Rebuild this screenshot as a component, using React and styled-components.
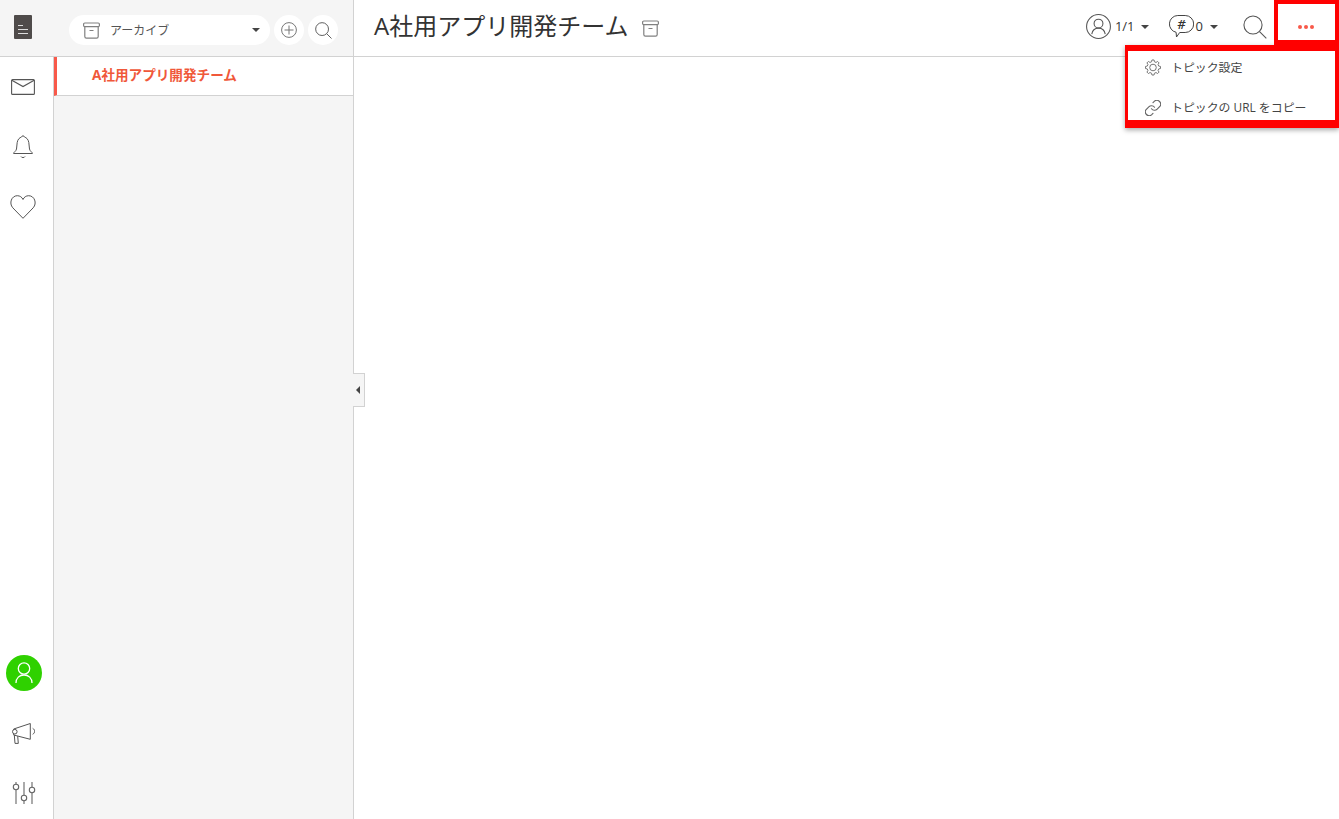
import React from 'react'
import styled, { createGlobalStyle } from 'styled-components'

const Global = createGlobalStyle`
  html, body { margin: 0; padding: 0; height: 100%; background: #fff; overflow: hidden; }
  body { font-family: "Open Sans", "Noto Sans CJK JP", sans-serif; color: #333; }
`
const Root = styled.div`
  position: relative;
  width: 1339px;
  height: 819px;
  overflow: hidden;
  display: grid;
  grid-template-columns: 53px 301px 1fr;
  grid-template-rows: 57px 762px;
`
const TopLeft = styled.div`
  grid-column: 1 / 3;
  background: #f5f5f5;
  border-right: 1px solid #d2d2d2;
  border-bottom: 1px solid #d2d2d2;
  box-sizing: border-box;
  display: flex;
  align-items: center;
  padding-left: 14px;
`
const Logo = styled.div`
  width: 18px;
  height: 24px;
  margin: 0 37px 2px 0;
  padding-bottom: 5px;
  box-sizing: border-box;
  border-radius: 1px;
  background: #4f4b4a;
  display: flex;
  flex-direction: column;
  align-items: center;
  justify-content: flex-end;
  gap: 3px;
`
const LogoLine = styled.span`
  display: block;
  height: 1px;
  width: 10px;
  background: #ddd;
`
const LogoShortLine = styled(LogoLine)`
  width: 5px;
  margin-right: 5px;
`
const Filter = styled.div`
  width: 201px;
  height: 30px;
  margin-top: 4px;
  border-radius: 15px;
  background: #fff;
  display: flex;
  align-items: center;
  padding: 0 10px 0 14px;
  box-sizing: border-box;
  font-size: 12px;
  color: #555;
  font-family: "Noto Sans CJK JP", sans-serif;
`
const FilterLabel = styled.span`
  flex: 1;
  margin: 0 0 1px 10px;
`
const RoundBtn = styled.div`
  width: 30px;
  height: 30px;
  margin: 4px 0 0 4px;
  border-radius: 50%;
  background: #fff;
  display: flex;
  align-items: center;
  justify-content: center;
`
const Header = styled.header`
  border-bottom: 1px solid #d2d2d2;
  display: flex;
  align-items: center;
  padding-left: 20px;
  box-sizing: border-box;
`
const Title = styled.h1`
  margin: 0 14px 4px 0;
  font-size: 24px;
  line-height: 30px;
  font-weight: 400;
  color: #333;
`
const Tools = styled.div`
  margin-left: auto;
  display: flex;
  align-items: center;
  height: 100%;
`
const Tool = styled.div`
  display: flex;
  align-items: center;
  font-size: 13px;
  color: #333;
  margin-bottom: 3px;
  margin-right: ${p => p.$mr}px;
`
const ToolText = styled.span`
  margin: 0 ${p => p.$mr}px 2px ${p => p.$ml}px;
`
const Caret = styled.span`
  width: 0;
  height: 0;
  border-left: 4px solid transparent;
  border-right: 4px solid transparent;
  border-top: 4px solid #444;
`
const MoreBtn = styled.div`
  position: absolute;
  top: 0;
  right: 0;
  width: 65px;
  height: 45px;
  box-sizing: border-box;
  border: 4px solid #f00;
  border-bottom-width: 5px;
  padding: 10px 1px 0 0;
  display: flex;
  align-items: center;
  justify-content: center;
  gap: 2px;
  background: #fff;
  z-index: 3;
`
const Dot = styled.span`
  width: 4px;
  height: 4px;
  border-radius: 50%;
  background: #f8594a;
`
const Menu = styled.div`
  position: absolute;
  top: 45px;
  right: 0;
  width: 214px;
  height: 83px;
  box-sizing: border-box;
  border-style: solid;
  border-color: #f00;
  border-width: 6px 4px 8px 3px;
  padding: 8px 0 0 17px;
  background: #fff;
  box-shadow: 0 2px 5px rgba(0, 0, 0, .35);
  z-index: 2;
  display: flex;
  flex-direction: column;
  gap: 24px;
`
const MenuItem = styled.div`
  height: 16px;
  display: flex;
  align-items: center;
  gap: 10px;
  font-size: 11.9px;
  color: #444;
`
const MenuLabel = styled.span`
  margin-bottom: 2px;
`
const Rail = styled.nav`
  display: flex;
  flex-direction: column;
  padding-right: 7px;
  margin-bottom: -4px;
`
const RailSlot = styled.div`
  height: 60px;
  display: flex;
  align-items: center;
  justify-content: center;
`
const RailBottom = styled.div`
  margin-top: auto;
`
const Avatar = styled.div`
  width: 36px;
  height: 36px;
  margin-left: 1px;
  border-radius: 50%;
  background: #2fd100;
  display: flex;
  align-items: center;
  justify-content: center;
`
const Side = styled.aside`
  border-left: 1px solid #d2d2d2;
  border-right: 1px solid #d2d2d2;
  background: #f5f5f5;
  box-sizing: border-box;
`
const TopicRow = styled.div`
  height: 39px;
  box-sizing: border-box;
  background: #fff;
  border-left: 3px solid #f8594a;
  border-bottom: 1px solid #d2d2d2;
  padding: 0 0 5px 35px;
  display: flex;
  align-items: center;
  font-size: 13.6px;
  font-weight: 700;
  color: #f0583a;
`
const Collapse = styled.div`
  position: absolute;
  left: 353px;
  top: 373px;
  width: 12px;
  height: 34px;
  padding-right: 2px;
  box-sizing: border-box;
  background: #f5f5f5;
  border: 1px solid #d2d2d2;
  border-left: none;
  display: flex;
  align-items: center;
  justify-content: center;
`
const CollapseArrow = styled.span`
  width: 0;
  height: 0;
  border-top: 4px solid transparent;
  border-bottom: 4px solid transparent;
  border-right: 4px solid #444;
`
const LinkSvg = styled.svg`
  margin-top: 2px;
`
const SlidersSvg = styled.svg`
  margin-left: 2px;
`

// 8 toothed outline for the settings icon
const gearPath = () => {
  const pt = (r, deg) => {
    const a = (deg * Math.PI) / 180
    return `${(8 + r * Math.sin(a)).toFixed(2)} ${(8.5 - r * Math.cos(a)).toFixed(2)}`
  }
  const pts = []
  for (let i = 0; i < 8; i++) {
    const a = i * 45
    pts.push(pt(5.9, a - 14), pt(7.6, a - 8), pt(7.6, a + 8), pt(5.9, a + 14))
  }
  return `M${pts.join('L')}z`
}

const Box = () => (
  <svg width="17" height="17" viewBox="0 0 17 17" fill="none" stroke="#808080" strokeWidth="1.2">
    <rect x=".6" y="1" width="15.8" height="3.6" rx="1.2" />
    <path d="M1.800 4.600v10a1.600 1.600 0 0 0 1.600 1.600h10.200a1.600 1.600 0 0 0 1.600-1.600v-10M6.500 8.500h4" />
  </svg>
)
const Plus = () => (
  <svg width="16" height="16" viewBox="0 0 16 16" fill="none" stroke="#777" strokeWidth="1">
    <circle cx="8" cy="8" r="7.400" />
    <path d="M8 3.500v9M3.500 8h9" />
  </svg>
)
const Search = ({ size }) => (
  <svg width={size} height={size} viewBox="0 0 18 18" fill="none" stroke="#555" strokeWidth={size > 20 ? 0.8 : 1}>
    <circle cx="7.500" cy="7.500" r="6.800" />
    <path d="M12.400 12.400 17.500 17.500" />
  </svg>
)
const Person = () => (
  <svg width="25" height="25" viewBox="0 0 26 26" fill="none" stroke="#555" strokeWidth="1.100">
    <circle cx="13" cy="13" r="12.400" />
    <circle cx="13" cy="10" r="4.600" />
    <path d="M6 21c.6-4 3.400-6.300 7-6.300s6.400 2.300 7 6.300" />
  </svg>
)
const UserIcon = () => (
  <svg width="18" height="22" viewBox="0 0 18 22" fill="none" stroke="#fff" strokeWidth="1.300">
    <circle cx="9" cy="6.500" r="5.700" />
    <path d="M1 21c0-5 3.500-8 8-8s8 3 8 8" />
  </svg>
)
const Bubble = () => (
  <svg width="25" height="23" viewBox="0 0 25 23" fill="none" stroke="#444" strokeWidth="1">
    <path d="M8.800.5h7.400a8.500 8.500 0 0 1 0 17h-5.500l-3.200 4.500-.4-4.700A8.500 8.500 0 0 1 8.800.5z" />
    <text x="12.500" y="13.500" textAnchor="middle" fontSize="13" fontStyle="italic" fontWeight="600" fill="#333" stroke="none" fontFamily="Open Sans">#</text>
  </svg>
)
const Gear = () => (
  <svg width="16" height="17" viewBox="0 0 16 17" fill="none" stroke="#777" strokeWidth="1" strokeLinejoin="round">
    <path d={gearPath()} />
    <circle cx="8" cy="8.500" r="3.300" />
  </svg>
)
const LinkIcon = () => (
  <LinkSvg width="16" height="16" viewBox="1.500 1.500 21 21" fill="none" stroke="#666" strokeWidth="1.500" strokeLinecap="round">
    <path d="M10 13a5 5 0 0 0 7.500.5l3.500-3.500a5 5 0 0 0-7-7l-2 2" />
    <path d="M14 11a5 5 0 0 0-7.500-.5L3 14a5 5 0 0 0 7 7l2-2" />
  </LinkSvg>
)
const Mail = () => (
  <svg width="24" height="16" viewBox="0 0 24 16" fill="none" stroke="#555" strokeWidth="1.100">
    <rect x=".6" y=".6" width="22.800" height="14.800" rx="1" />
    <path d="M.8 1.200 12 7.500 23.200 1.200" />
  </svg>
)
const Bell = () => (
  <svg width="20" height="24" viewBox="0 0 20 24" fill="none" stroke="#555" strokeWidth="1">
    <path d="M.6 18.500c0-1.500 2.400-2 2.900-4.500l.7-6.500C4.700 4.200 6.800 2.500 8.300 2.200 8.900.4 11.100.4 11.700 2.200c1.500.3 3.600 2 4.100 5.300l.7 6.500c.5 2.500 2.900 3 2.900 4.500z" />
    <path d="M8 21.500c.4 1.400 3.600 1.400 4 0" />
  </svg>
)
const Heart = () => (
  <svg width="26" height="24" viewBox="0 0 26 24" fill="none" stroke="#555" strokeWidth="1">
    <path d="M13 23.300 2.800 12.800C-1.300 8.300 1.500.7 7.300.7c2.700 0 4.700 1.500 5.700 3.800 1-2.300 3-3.800 5.700-3.800 5.800 0 8.600 7.600 4.500 12.100z" />
  </svg>
)
const Megaphone = () => (
  <svg width="23" height="21" viewBox="0 0 23 21" fill="none" stroke="#555" strokeWidth="1">
    <path d="M1.700 6 18.300.5v15.800L1.700 12z" />
    <circle cx="2.800" cy="8.700" r="2.300" fill="#fff" />
    <path d="M2.300 12 3 20.400h3.300L5.700 13.200" />
    <path d="M20.700 5.300c2.600 1.500 2.600 4.500 0 6" />
  </svg>
)
const Sliders = () => (
  <SlidersSvg width="24" height="22" viewBox="0 0 24 22" fill="none" stroke="#666" strokeWidth="1.100">
    <path d="M4 0v2.300M4 7.700V22M12 0v13.300M12 18.700V22M20 0v5.300M20 10.700V22" />
    <circle cx="4" cy="5" r="2.700" />
    <circle cx="12" cy="16" r="2.700" />
    <circle cx="20" cy="8" r="2.700" />
  </SlidersSvg>
)

const App = () => (
  <Root>
    <Global />
    <TopLeft>
      <Logo>
        <LogoShortLine />
        <LogoLine />
        <LogoLine />
      </Logo>
      <Filter>
        <Box />
        <FilterLabel>アーカイブ</FilterLabel>
        <Caret />
      </Filter>
      <RoundBtn><Plus /></RoundBtn>
      <RoundBtn><Search size={17} /></RoundBtn>
    </TopLeft>
    <Header>
      <Title>A社用アプリ開発チーム</Title>
      <Box />
      <Tools>
        <Tool $mr={20}>
          <Person />
          <ToolText $ml={4} $mr={6}>1/1</ToolText>
          <Caret />
        </Tool>
        <Tool $mr={25}>
          <Bubble />
          <ToolText $ml={2} $mr={7}>0</ToolText>
          <Caret />
        </Tool>
        <Tool $mr={72}>
          <Search size={24} />
        </Tool>
      </Tools>
    </Header>
    <Rail>
      <RailSlot><Mail /></RailSlot>
      <RailSlot><Bell /></RailSlot>
      <RailSlot><Heart /></RailSlot>
      <RailBottom>
        <RailSlot><Avatar><UserIcon /></Avatar></RailSlot>
        <RailSlot><Megaphone /></RailSlot>
        <RailSlot><Sliders /></RailSlot>
      </RailBottom>
    </Rail>
    <Side>
      <TopicRow>A社用アプリ開発チーム</TopicRow>
    </Side>
    <Collapse><CollapseArrow /></Collapse>
    <MoreBtn><Dot /><Dot /><Dot /></MoreBtn>
    <Menu>
      <MenuItem><Gear /><MenuLabel>トピック設定</MenuLabel></MenuItem>
      <MenuItem><LinkIcon /><MenuLabel>トピックの URL をコピー</MenuLabel></MenuItem>
    </Menu>
  </Root>
)

export default App
